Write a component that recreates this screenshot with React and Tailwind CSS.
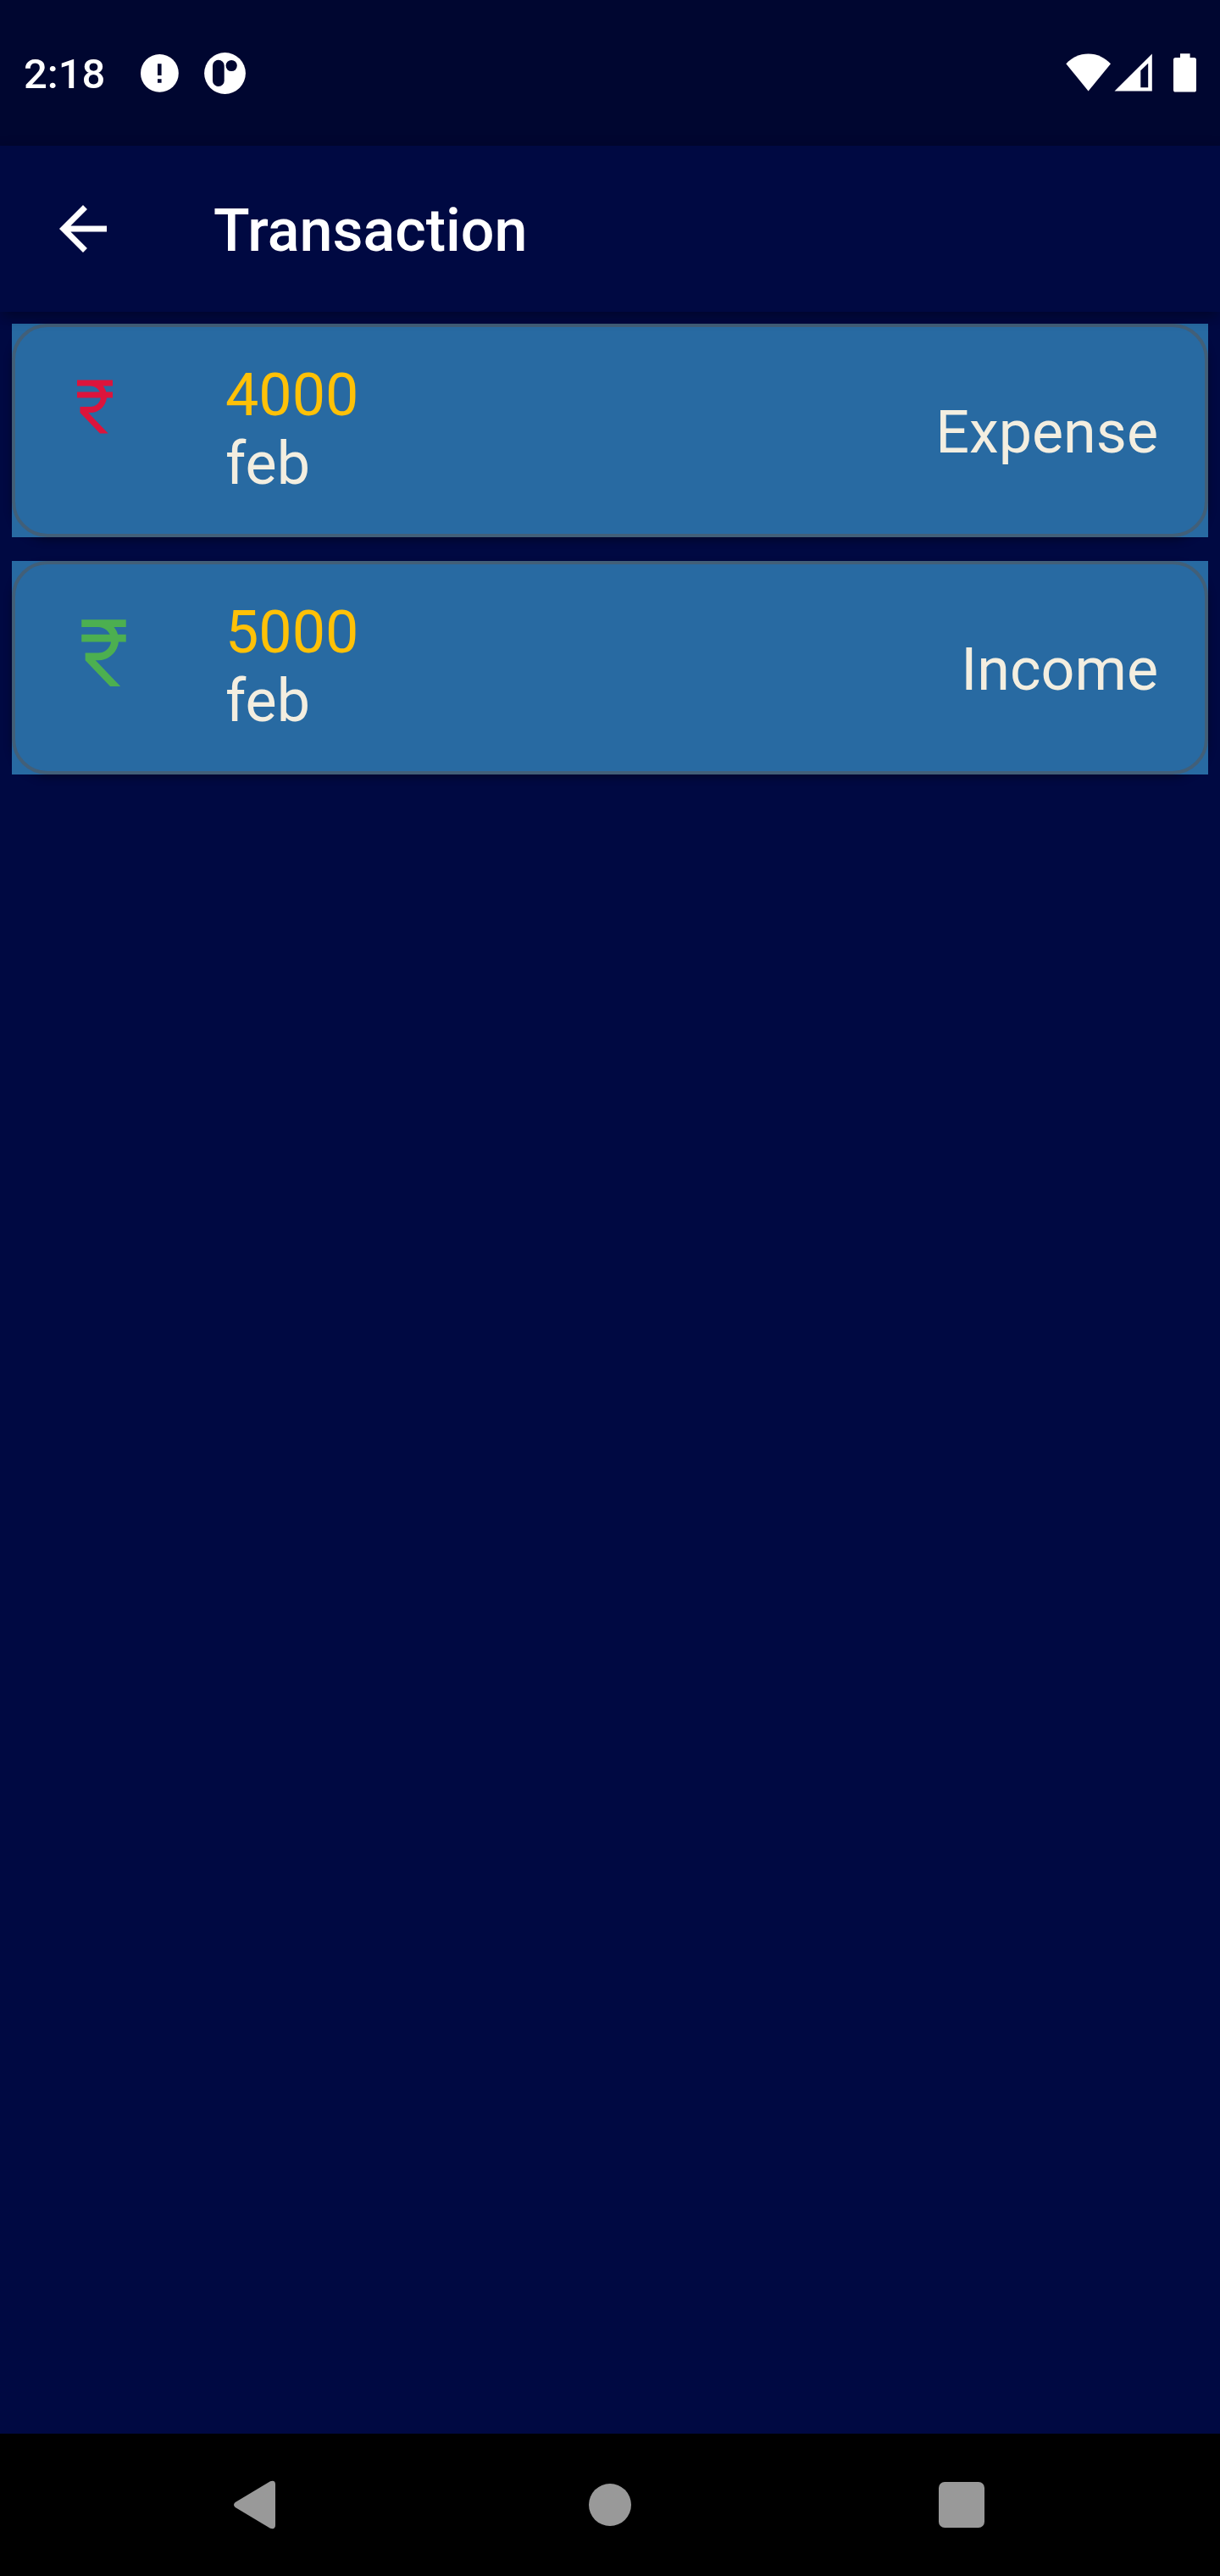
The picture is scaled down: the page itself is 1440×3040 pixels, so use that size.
const transactions = [
  {
    amount: "4000",
    month: "feb",
    type: "Expense",
    icon: "size-[84px] text-[#dc143c]",
  },
  {
    amount: "5000",
    month: "feb",
    type: "Income",
    icon: "size-[105px] text-[#4caf50]",
  },
];

function RupeeIcon({ className }) {
  return (
    <svg viewBox="0 0 24 24" fill="currentColor" className={className}>
      <path d="M13.66 7c-.56-1.18-1.76-2-3.16-2H6V3h12v2h-3.26c.48.58.84 1.26 1.05 2H18v2h-2.02c-.25 2.8-2.61 5-5.48 5h-.73l6.73 7h-2.77L7 14v-2h3.5c1.76 0 3.22-1.3 3.46-3H6V7h7.66z" />
    </svg>
  );
}

function StatusBar() {
  return (
    <div className="flex h-[172px] items-start justify-between bg-[#000630] pr-[28px] pl-[28px] pt-[56px] text-white">
      <div className="flex h-[60px] items-center">
        <span className="w-[138px] pt-[4px] text-[49px] leading-[58px] font-medium">2:18</span>
        <svg className="h-[45px] w-[45px]" viewBox="0 0 45 45">
          <circle cx="22.4" cy="22.4" r="22.4" fill="white" />
          <path d="M20 11.3h4.6v13.6H20zM20 29.2h4.6v4.6H20z" fill="#000630" />
        </svg>
        <svg className="ml-[30px] h-[49px] w-[49px]" viewBox="0 0 49 49">
          <circle cx="24.5" cy="24.5" r="24.4" fill="white" />
          <rect x="10" y="8.8" width="13.7" height="31.2" rx="6.85" fill="#000630" />
          <circle cx="32.2" cy="15.5" r="6.6" fill="#000630" />
        </svg>
      </div>
      <div className="flex h-[60px] items-start pt-[7px]">
        <svg className="h-[46px] w-[54px]" viewBox="0 0 54 46" fill="white">
          <path d="M0.3 12.2C7 5.2 15.800 0.500 26.600 0.500S46 5.200 53 12.200L26.600 44.500z" />
        </svg>
        <svg className="ml-[3px] h-[46px] w-[45px]" viewBox="0 0 45 46" fill="white">
          <path fillRule="evenodd" d="M0.500 44.600L44.800 0.500V44.600zM31.300 20.300V40.300H40.200V11.800z" />
        </svg>
        <svg className="ml-[25px] h-[46px] w-[27px]" viewBox="0 0 27 46" fill="white">
          <path d="M8 0.300H19.600V5H24.500Q27 5 27 7.500V43Q27 45.600 24.500 45.600H2.500Q0 45.600 0 43V7.500Q0 5 2.500 5H8z" />
        </svg>
      </div>
    </div>
  );
}

function AppBar() {
  return (
    <header className="relative z-10 flex h-[196px] items-center bg-[#000942] pl-[56px] text-white shadow-[0_12px_14px_-4px_rgba(0,0,0,0.2),0_2px_14px_rgba(0,0,0,0.2)]">
      <svg viewBox="0 0 24 24" fill="currentColor" className="size-[84px]">
        <path d="M20 11H7.830l5.590-5.590L12 4l-8 8 8 8 1.410-1.410L7.830 13H20v-2z" />
      </svg>
      <h1 className="ml-[112px] pt-[4px] text-[70px] leading-[82px] font-medium">Transaction</h1>
    </header>
  );
}

function TransactionCard({ amount, month, type, icon }) {
  return (
    <li className="h-[252px] rounded-[42px] shadow-[0_4px_10px_rgba(0,0,0,0.35)]">
      <div className="h-full bg-[#286aa2]">
        <div className="flex h-full items-center rounded-[42px] border-4 border-[#425f78] pr-[55px] pl-[52px] text-[70px] leading-[81px] text-[#f3eee0]">
          <div className="w-[196px] self-start pt-[52px]">
            <RupeeIcon className={icon} />
          </div>
          <div className="flex-1 pb-[3px]">
            <p className="text-[#ffc107]">{amount}</p>
            <p>{month}</p>
          </div>
          <p className="pt-[4px]">{type}</p>
        </div>
      </div>
    </li>
  );
}

function NavigationBar() {
  return (
    <nav className="flex h-[168px] items-center bg-black pl-[276px] text-[#999999]">
      <svg className="h-[58px] w-[49px]" viewBox="0 0 49 58" fill="currentColor">
        <path d="M43 1.300Q49 -0.500 49 5V53Q49 58.500 43 56.700L1.700 32Q-1.700 29 1.700 26z" />
      </svg>
      <div className="ml-[370px] size-[50px] rounded-full bg-current" />
      <div className="ml-[363px] size-[54px] rounded-[7px] bg-current" />
    </nav>
  );
}

export default function App() {
  return (
    <div className="flex h-[3040px] w-[1440px] flex-col overflow-hidden bg-[#000942] font-[Roboto,sans-serif]">
      <StatusBar />
      <AppBar />
      <ul className="flex flex-1 flex-col gap-[28px] p-[14px]">
        {transactions.map((item) => (
          <TransactionCard key={item.type} {...item} />
        ))}
      </ul>
      <NavigationBar />
    </div>
  );
}
